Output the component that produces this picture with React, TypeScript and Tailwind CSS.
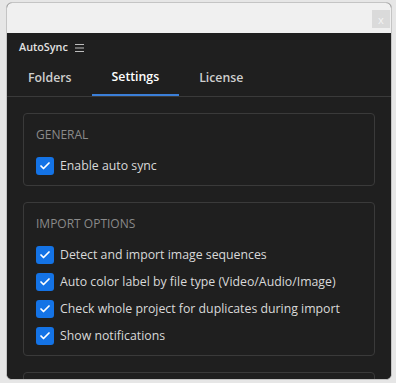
import { Check } from 'lucide-react';

const font = { fontFamily: '"Open Sans", "Noto Sans", sans-serif' };

function CheckRow({ label }: { label: string }) {
  return (
    <div className="flex items-center gap-[6px] h-[18px]">
      <span className="w-[18px] h-[18px] rounded-[3px] bg-[#1473e6] flex items-center justify-center shrink-0">
        <Check className="w-[12px] h-[12px] text-white" strokeWidth={3.5} />
      </span>
      <span className="text-[12.3px] text-[#d9d9d9] leading-none">{label}</span>
    </div>
  );
}

function Section({ title, children }: { title?: string; children?: React.ReactNode }) {
  return (
    <div className="border border-[#3a3a3a] rounded-[4px] px-[12px] pt-[13px] pb-[10px] min-h-[40px]">
      {title && (
        <>
          <div className="text-[12px] text-[#8a8a8a] leading-[16px] uppercase">{title}</div>
          <div className="mt-[14px] flex flex-col gap-[9px]">{children}</div>
        </>
      )}
    </div>
  );
}

export default function App() {
  return (
    <div className="w-[396px] h-[383px] bg-[#e6e6e6] overflow-hidden pt-[2px] pl-[6px]" style={font}>
      <div className="w-[386px] h-[378px] border border-[#c4c4c4] rounded-[6px] overflow-hidden flex flex-col bg-[#1f1f1f]">
        {/* title bar */}
        <div className="h-[30px] bg-[#f0f0f0] flex justify-end items-start pt-[7px] pr-[1px] shrink-0">
          <div className="w-[18px] h-[18px] bg-[#dadada] flex items-center justify-center text-[11px] leading-none text-[#f4f4f4]">
            x
          </div>
        </div>

        {/* panel */}
        <div className="flex-1 bg-[#1f1f1f] overflow-hidden">
          <div className="flex items-center h-[27px] pl-[12px] gap-[7px] pt-[1px]">
            <span className="text-[10.8px] font-semibold text-[#e2e2e2]">AutoSync</span>
            <svg width="9" height="8" viewBox="0 0 9 8" className="mt-[1px]">
              <path d="M0 0.5H9M0 4H9M0 7.5H9" stroke="#bdbdbd" strokeWidth="1" />
            </svg>
          </div>
          <div className="flex border-b border-[#3a3a3a] pl-[1px] h-[37px]">
            <div className="px-[20px] flex items-center text-[12.3px] font-semibold text-[#cfcfcf]">Folders</div>
            <div className="px-[20px] flex items-center text-[12.3px] font-semibold text-white border-b-2 border-[#3b7fd8]">
              Settings
            </div>
            <div className="px-[20px] flex items-center text-[12.3px] font-semibold text-[#cfcfcf]">License</div>
          </div>

          <div className="px-[16px] pt-[16px] flex flex-col gap-[16px]">
            <Section title="General">
              <CheckRow label="Enable auto sync" />
            </Section>
            <Section title="Import Options">
              <CheckRow label="Detect and import image sequences" />
              <CheckRow label="Auto color label by file type (Video/Audio/Image)" />
              <CheckRow label="Check whole project for duplicates during import" />
              <CheckRow label="Show notifications" />
            </Section>
            <Section />
          </div>
        </div>
      </div>
    </div>
  );
}
